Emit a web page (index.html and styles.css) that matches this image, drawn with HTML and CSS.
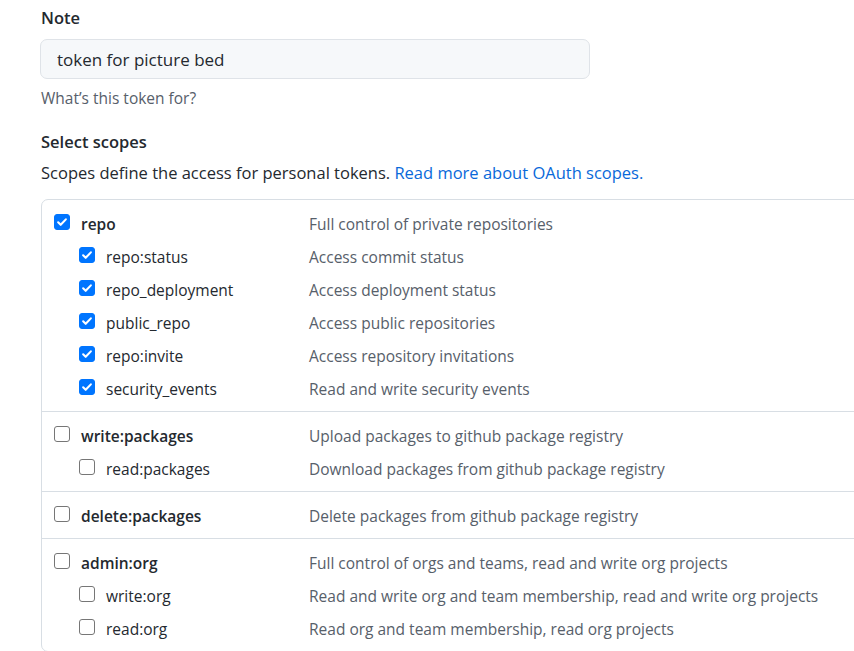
FILE: index.html
```html
<!DOCTYPE html>
<html lang="en">
<head>
<meta charset="utf-8">
<title>New personal access token</title>
<link rel="stylesheet" href="styles.css">
</head>
<body>
<div class="page">
  <form class="form">
    <div class="field">
      <label class="label" for="note">Note</label>
      <input class="input" id="note" type="text" value="token for picture bed">
      <p class="hint">What’s this token for?</p>
    </div>

    <h3 class="label scopes-title">Select scopes</h3>
    <p class="lead">Scopes define the access for personal tokens. <a href="#" class="link">Read more about OAuth scopes.</a></p>

    <div class="scopes">
      <div class="group">
        <div class="row top"><span class="cb on"></span><span class="name">repo</span><span class="desc">Full control of private repositories</span></div>
        <div class="row sub"><span class="cb on"></span><span class="name">repo:status</span><span class="desc">Access commit status</span></div>
        <div class="row sub"><span class="cb on"></span><span class="name">repo_deployment</span><span class="desc">Access deployment status</span></div>
        <div class="row sub"><span class="cb on"></span><span class="name">public_repo</span><span class="desc">Access public repositories</span></div>
        <div class="row sub"><span class="cb on"></span><span class="name">repo:invite</span><span class="desc">Access repository invitations</span></div>
        <div class="row sub"><span class="cb on"></span><span class="name">security_events</span><span class="desc">Read and write security events</span></div>
      </div>
      <div class="group">
        <div class="row top"><span class="cb"></span><span class="name">write:packages</span><span class="desc">Upload packages to github package registry</span></div>
        <div class="row sub"><span class="cb"></span><span class="name">read:packages</span><span class="desc">Download packages from github package registry</span></div>
      </div>
      <div class="group">
        <div class="row top"><span class="cb"></span><span class="name">delete:packages</span><span class="desc">Delete packages from github package registry</span></div>
      </div>
      <div class="group">
        <div class="row top"><span class="cb"></span><span class="name">admin:org</span><span class="desc">Full control of orgs and teams, read and write org projects</span></div>
        <div class="row sub"><span class="cb"></span><span class="name">write:org</span><span class="desc">Read and write org and team membership, read and write org projects</span></div>
        <div class="row sub"><span class="cb"></span><span class="name">read:org</span><span class="desc">Read org and team membership, read org projects</span></div>
      </div>
    </div>
  </form>
</div>
</body>
</html>
```

FILE: styles.css
```css
* { box-sizing: border-box; }
html, body {
  margin: 0;
  padding: 0;
  background: #ffffff;
  overflow: hidden;
}
body {
  font-family: "Open Sans", "Noto Sans", "Liberation Sans", sans-serif;
  font-size: 15.5px;
  color: #24292f;
}
.page {
  padding: 5px 0 0 41px;
  width: 980px;
}
.form { margin: 0; }
.label {
  display: block;
  font-weight: 600;
  font-size: 16.5px;
  line-height: 26px;
  margin: 0 0 8px 0;
  color: #24292f;
}
.input {
  display: block;
  margin-left: -1px;
  width: 550px;
  height: 40px;
  padding: 0 16px;
  font-family: inherit;
  font-size: 17px;
  color: #24292f;
  background: #f6f8fa;
  border: 1px solid #dfe3e8;
  border-radius: 7px;
  outline: none;
}
.hint {
  margin: 8px 0 0 0;
  font-size: 15.5px;
  line-height: 22px;
  color: #57606a;
}
.scopes-title {
  margin-top: 20px;
  margin-bottom: 6px;
}
.lead {
  margin: 0 0 14px 0;
  font-size: 16.5px;
  line-height: 24px;
}
.link {
  color: #0969da;
  text-decoration: none;
}
.scopes {
  border: 1px solid #d8dee4;
  border-radius: 7px;
  width: 900px;
}
.group {
  padding: 7px 0 6px 0;
  border-top: 1px solid #d8dee4;
}
.group:first-child { border-top: 0; }
.row {
  display: flex;
  align-items: center;
  height: 33px;
}
.row .cb { margin-left: 12px; }
.row.sub .cb { margin-left: 37px; }
.cb {
  flex: none;
  width: 16px;
  height: 16px;
  border: 1px solid #767676;
  border-radius: 3px;
  background: #fff;
  margin-top: -3px;
}
.cb.on {
  border-color: #0075ff;
  background: #0075ff url("data:image/svg+xml,%3Csvg xmlns='http://www.w3.org/2000/svg' viewBox='0 0 16 16'%3E%3Cpath d='M3.6 8.3l2.9 2.9 5.9-6.2' fill='none' stroke='white' stroke-width='2.4' stroke-linecap='round' stroke-linejoin='round'/%3E%3C/svg%3E") center/14px 14px no-repeat;
}
.name {
  margin-left: 11px;
  flex: none;
}
.row.top .name { font-weight: 600; width: 228px; }
.row.sub .name { width: 203px; }
.desc { color: #57606a; }
```
